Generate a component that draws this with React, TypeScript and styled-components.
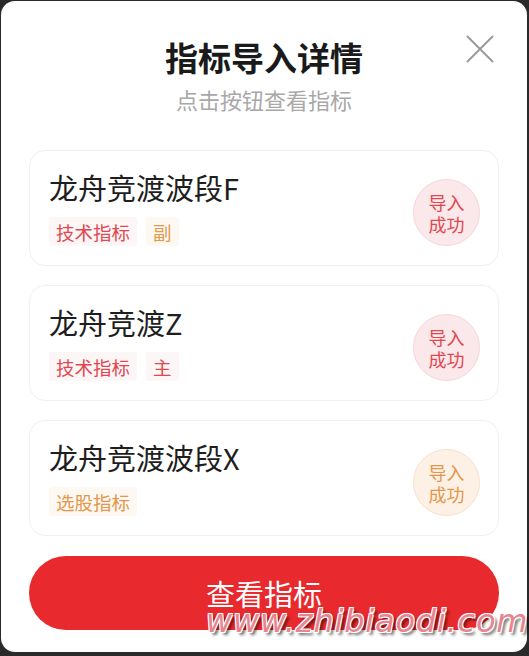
import styled, { createGlobalStyle } from "styled-components";

type Tone = "red" | "orange";

interface Item {
  name: string;
  tags: { label: string; tone: Tone }[];
  tone: Tone;
}

const items: Item[] = [
  {
    name: "龙舟竞渡波段F",
    tags: [
      { label: "技术指标", tone: "red" },
      { label: "副", tone: "orange" },
    ],
    tone: "red",
  },
  {
    name: "龙舟竞渡Z",
    tags: [
      { label: "技术指标", tone: "red" },
      { label: "主", tone: "red" },
    ],
    tone: "red",
  },
  {
    name: "龙舟竞渡波段X",
    tags: [{ label: "选股指标", tone: "orange" }],
    tone: "orange",
  },
];

const palette = {
  red: { text: "#e0474f", tagBg: "#fdf6f6", badgeBg: "#fbe8ea", badgeBorder: "#f6d6da" },
  orange: { text: "#e4974a", tagBg: "#fdf8f2", badgeBg: "#fdf1e6", badgeBorder: "#f8e0c8" },
};

const GlobalStyle = createGlobalStyle`
  html, body {
    margin: 0;
    padding: 0;
    background: #2a2a2a;
    overflow: hidden;
  }
  body {
    font-family: "Noto Sans CJK SC", "Noto Sans", sans-serif;
  }
`;

const Page = styled.div`
  padding: 1px 2px 4px 1px;
`;

const Modal = styled.div`
  position: relative;
  height: 651px;
  box-sizing: border-box;
  background: #ffffff;
  border-radius: 14px;
  padding: 33px 28px 22px 28px;
  display: flex;
  flex-direction: column;
`;

const Header = styled.div`
  display: flex;
  flex-direction: column;
  align-items: center;
  margin-bottom: 36px;
`;

const Title = styled.h1`
  margin: 0;
  font-size: 33px;
  line-height: 46px;
  font-weight: 700;
  color: #1a1a1a;
`;

const Subtitle = styled.div`
  margin-top: 4px;
  font-size: 22px;
  line-height: 30px;
  color: #a8a8a8;
`;

const CloseButton = styled.button`
  position: absolute;
  top: 33px;
  right: 32px;
  width: 30px;
  height: 30px;
  padding: 0;
  border: none;
  background: transparent;
  display: flex;
  align-items: center;
  justify-content: center;
`;

const List = styled.div`
  display: flex;
  flex-direction: column;
  gap: 19px;
`;

const Card = styled.div`
  display: flex;
  align-items: center;
  justify-content: space-between;
  height: 116px;
  box-sizing: border-box;
  padding: 19px 18px 20px 19px;
  border: 1px solid #f0f0f0;
  border-radius: 16px;
  background: #ffffff;
`;

const CardInfo = styled.div`
  display: flex;
  flex-direction: column;
  gap: 12px;
`;

const Name = styled.div`
  font-size: 29px;
  line-height: 36px;
  color: #1e1e1e;
`;

const TagRow = styled.div`
  display: flex;
  gap: 9px;
`;

const Tag = styled.span<{ $tone: Tone }>`
  display: inline-flex;
  align-items: center;
  height: 29px;
  padding: 0 7px;
  border-radius: 3px;
  font-size: 18.5px;
  color: ${(p) => palette[p.$tone].text};
  background: ${(p) => palette[p.$tone].tagBg};
`;

const Badge = styled.div<{ $tone: Tone }>`
  width: 67px;
  height: 67px;
  margin-top: 10px;
  flex-shrink: 0;
  box-sizing: border-box;
  border-radius: 50%;
  border: 1px solid ${(p) => palette[p.$tone].badgeBorder};
  background: ${(p) => palette[p.$tone].badgeBg};
  color: ${(p) => palette[p.$tone].text};
  display: flex;
  flex-direction: column;
  align-items: center;
  justify-content: center;
  font-size: 18px;
  line-height: 22px;
`;

const PrimaryButton = styled.button`
  margin-top: 20px;
  height: 74px;
  border: none;
  border-radius: 37px;
  background: #e8292d;
  color: #ffffff;
  font-family: inherit;
  font-size: 29px;
`;

const Watermark = styled.div`
  position: absolute;
  left: 205px;
  top: 601px;
  font-family: "DejaVu Sans", sans-serif;
  font-style: italic;
  font-size: 32px;
  line-height: 38px;
  letter-spacing: 0.8px;
  white-space: nowrap;
  color: #e78490;
  pointer-events: none;
  text-shadow:
    -1px -1px 0 #fff, 1px -1px 0 #fff, -1px 1px 0 #fff, 1px 1px 0 #fff,
    3px 3px 3px rgba(0, 0, 0, 0.6);
`;

export default function App() {
  return (
    <Page>
      <GlobalStyle />
      <Modal>
        <CloseButton aria-label="关闭">
          <svg width="30" height="30" viewBox="0 0 30 30">
            <path d="M2 2 L28 28 M28 2 L2 28" stroke="#9a9a9a" strokeWidth="2" fill="none" />
          </svg>
        </CloseButton>
        <Header>
          <Title>指标导入详情</Title>
          <Subtitle>点击按钮查看指标</Subtitle>
        </Header>
        <List>
          {items.map((item) => (
            <Card key={item.name}>
              <CardInfo>
                <Name>{item.name}</Name>
                <TagRow>
                  {item.tags.map((tag) => (
                    <Tag key={tag.label} $tone={tag.tone}>
                      {tag.label}
                    </Tag>
                  ))}
                </TagRow>
              </CardInfo>
              <Badge $tone={item.tone}>
                <span>导入</span>
                <span>成功</span>
              </Badge>
            </Card>
          ))}
        </List>
        <PrimaryButton>查看指标</PrimaryButton>
        <Watermark>www.zhibiaodi.com</Watermark>
      </Modal>
    </Page>
  );
}
